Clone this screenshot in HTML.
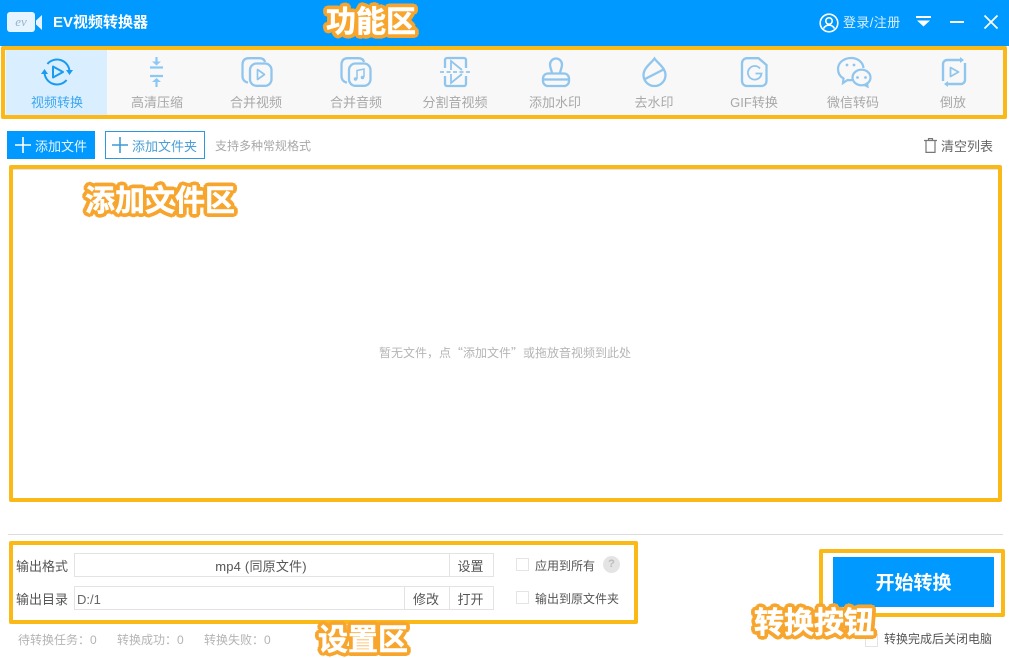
<!DOCTYPE html>
<html lang="zh-CN">
<head>
<meta charset="utf-8">
<title>EV视频转换器</title>
<style>
html,body{margin:0;padding:0;background:#fff}
body{width:1009px;height:658px;overflow:hidden;position:relative;font-family:"Liberation Sans","Noto Sans CJK SC",sans-serif;color:#555}
.a{position:absolute;box-sizing:border-box}
.t{position:absolute;white-space:nowrap;line-height:18px}
.c{transform:translateX(-50%);text-align:center}
.y{position:absolute;box-sizing:border-box;border:4px solid #fbb918;border-radius:2px}
.lab{font-size:13px;color:#a8a8a8;top:94px}
.ov{position:absolute;white-space:nowrap;font-weight:700;font-size:30px;line-height:34px;color:#fff;-webkit-text-stroke:.5px #fff;
text-shadow:4px 0 0 #f7a52c,-4px 0 0 #f7a52c,0 4px 0 #f7a52c,0 -4px 0 #f7a52c,2.800px 2.800px 0 #f7a52c,-2.800px 2.800px 0 #f7a52c,2.800px -2.800px 0 #f7a52c,-2.800px -2.800px 0 #f7a52c,3.700px 1.500px 0 #f7a52c,-3.700px 1.500px 0 #f7a52c,3.700px -1.500px 0 #f7a52c,-3.700px -1.500px 0 #f7a52c,1.500px 3.700px 0 #f7a52c,-1.500px 3.700px 0 #f7a52c,1.500px -3.700px 0 #f7a52c,-1.500px -3.700px 0 #f7a52c}
.box{position:absolute;box-sizing:border-box;border:1px solid #e3e3e3;background:#fff;font-size:13px;line-height:25px;text-align:center;color:#555}
.cb{position:absolute;box-sizing:border-box;width:13px;height:13px;border:1px solid #e4e4e4;background:#fff}
svg{position:absolute;overflow:visible}
</style>
</head>
<body>
<div class="a" style="left:0;top:0;width:1009px;height:46px;background:#0099ff"></div>

<svg style="left:7px;top:12px" width="36" height="20" viewBox="0 0 36 20">
<rect x="0" y="0" width="28" height="20" rx="3" fill="#e6f4ff"/>
<path d="M29 8.500L35 3V18L29 12.500z" fill="#e6f4ff"/>
<text x="14" y="14" font-size="13" font-style="italic" fill="#9ab2c8" text-anchor="middle" font-family="Liberation Serif,serif">ev</text>
</svg>
<div class="t" style="left:53px;top:14px;font-size:15px;font-weight:700;color:#fff">EV视频转换器</div>

<svg style="left:819px;top:13px" width="20" height="20" viewBox="0 0 20 20" fill="none" stroke="#fff" stroke-width="1.600">
<circle cx="10" cy="10" r="8.800"/><circle cx="10" cy="8" r="3.200"/><path d="M4.500 15.500c1.500-2.500 3.500-3.400 5.500-3.400s4 .9 5.500 3.400"/>
</svg>
<div class="t" style="left:843px;top:14px;font-size:13px;letter-spacing:.4px;color:#d8eeff">登录/注册</div>
<svg style="left:916px;top:16px" width="15" height="12" viewBox="0 0 15 12" fill="#fff"><rect x="0" y="0" width="15" height="2"/><path d="M1 4.500h13l-6.500 6z"/></svg>
<div class="a" style="left:950px;top:21px;width:14px;height:2px;background:#fff"></div>
<svg style="left:984px;top:15px" width="14" height="14" viewBox="0 0 14 14" stroke="#fff" stroke-width="1.700"><path d="M.5.500l13 13M13.500.500l-13 13"/></svg>

<!-- toolbar -->
<div class="a" style="left:1px;top:46px;width:1006px;height:73px;background:#f8f8f8"></div>
<div class="a" style="left:6px;top:50px;width:101px;height:65px;background:#d9efff"></div>
<div class="y" style="left:1px;top:46px;width:1006px;height:73px"></div>

<svg style="left:41px;top:57px" width="32" height="30" viewBox="0 0 32 30" fill="none" stroke="#1a9bf0" stroke-width="2">
<path d="M6.400 7A12.500 12.500 0 0 1 28.500 15"/><path d="M25.600 23A12.500 12.500 0 0 1 3.500 15"/>
<path d="M12 9.500l10 5.500-10 5.500z" stroke-linejoin="round"/>
<path d="M0 17h7l-3.500-5z" fill="#1a9bf0" stroke="none"/><path d="M25 13h7l-3.500 5z" fill="#1a9bf0" stroke="none"/>
</svg>
<svg style="left:149px;top:57px" width="15" height="30" viewBox="0 0 15 30" fill="none" stroke="#8cc8f5" stroke-width="2.200">
<path d="M1 10.500h13M1 19h13"/><path d="M7.500 0v6M7.500 24v6"/>
<path d="M3 4.500h9L7.500 8.500zM3 25h9l-4.500-4z" fill="#8cc8f5" stroke="none"/>
</svg>
<svg style="left:241px;top:57px" width="32" height="30" viewBox="0 0 32 30" fill="none" stroke="#90c5ee" stroke-width="2.300">
<path d="M7 25.500C3.500 25 1.500 22.500 1.500 19V8C1.500 3.500 3.500 1.200 8 1.200h10c3.500 0 5.500 1.300 6 3.800"/>
<rect x="9" y="6.500" width="21.500" height="22.300" rx="6.500"/><path d="M16.500 12.500l7 5-7 5z" stroke-width="1.700" stroke-linejoin="round"/>
</svg>
<svg style="left:340px;top:57px" width="32" height="30" viewBox="0 0 32 30" fill="none" stroke="#90c5ee" stroke-width="2.300">
<path d="M7 25.500C3.500 25 1.500 22.500 1.500 19V8C1.500 3.500 3.500 1.200 8 1.200h10c3.500 0 5.500 1.300 6 3.800"/>
<rect x="9" y="6.500" width="21.500" height="22.300" rx="6.500"/>
<path d="M17 22V13.500l7-1.500V20" stroke-width="1.500"/><circle cx="15.500" cy="22" r="1.800" fill="#90c5ee" stroke="none"/><circle cx="22.500" cy="20.500" r="1.800" fill="#90c5ee" stroke="none"/>
</svg>
<svg style="left:440px;top:57px" width="31" height="30" viewBox="0 0 31 30" fill="none" stroke="#90c5ee" stroke-width="2.300">
<path d="M5 11V3a2 2 0 0 1 2-2h17a2 2 0 0 1 2 2v8M5 19v8a2 2 0 0 0 2 2h17a2 2 0 0 0 2-2v-8"/>
<path d="M0 15h31" stroke-dasharray="4 2.500" stroke-width="1.800"/>
<path d="M11 13V4l11 9M11 17v9l11-9" stroke-width="1.800"/>
</svg>
<svg style="left:542px;top:57px" width="28" height="30" viewBox="0 0 28 30" fill="none" stroke="#90c5ee" stroke-width="2.300">
<path d="M10 16.500c0-3-2-5-2-9a6 6 0 0 1 12 0c0 4-2 6-2 9"/>
<rect x="1" y="16.500" width="26" height="12.500" rx="5"/><path d="M1 22.500h26"/>
</svg>
<svg style="left:642px;top:57px" width="25" height="30" viewBox="0 0 25 30" fill="none" stroke="#90c5ee" stroke-width="2.300">
<path d="M12.500 1.500C9 6.500 1.500 11 1.500 18a11 11 0 0 0 22 0C23.500 11 16 6.500 12.500 1.500z"/><path d="M3 22L21.500 12.500"/>
</svg>
<svg style="left:741px;top:57px" width="27" height="30" viewBox="0 0 27 30" fill="none" stroke="#90c5ee" stroke-width="2.300">
<path d="M6 1.200h11.500L25.500 8v16a5 5 0 0 1-5 5H6a5 5 0 0 1-5-5V6.200a5 5 0 0 1 5-5z"/>
<path d="M19 11.500A6.800 6.800 0 1 0 20.500 16.500H14.500" stroke-width="1.800"/>
</svg>
<svg style="left:837px;top:57px" width="34" height="30" viewBox="0 0 34 30" fill="none" stroke="#90c5ee" stroke-width="2.200">
<path d="M15 23c-1.500.3-3 .3-4.500 0L6 26l.5-4.500C3 19.500 1 16 1 12 1 5.500 7 1 14 1c6.500 0 12 4 12.500 10"/>
<ellipse cx="24.500" cy="20.500" rx="9" ry="7.800"/><path d="M27.500 28l3 1.500-.5-4"/>
<circle cx="10" cy="8" r="1.400" fill="#90c5ee" stroke="none"/><circle cx="17" cy="8" r="1.400" fill="#90c5ee" stroke="none"/>
<circle cx="20.500" cy="20.500" r="1.400" fill="#90c5ee" stroke="none"/><circle cx="28.500" cy="20.500" r="1.400" fill="#90c5ee" stroke="none"/>
</svg>
<svg style="left:942px;top:57px" width="24" height="30" viewBox="0 0 24 30" fill="none" stroke="#90c5ee" stroke-width="2.400">
<path d="M19 3H5a4 4 0 0 0-4 4v17"/><path d="M5 27h14a4 4 0 0 0 4-4V6"/>
<path d="M18 0v6l4-3zM6 24v6l-4-3z" fill="#90c5ee" stroke="none"/>
<path d="M8.500 10.500l8 4.500-8 4.500z" stroke-width="1.800" stroke-linejoin="round"/>
</svg>

<div class="t c lab" style="left:57px;color:#3ca6f0">视频转换</div>
<div class="t c lab" style="left:157px">高清压缩</div>
<div class="t c lab" style="left:256px">合并视频</div>
<div class="t c lab" style="left:356px">合并音频</div>
<div class="t c lab" style="left:455px">分割音视频</div>
<div class="t c lab" style="left:555px">添加水印</div>
<div class="t c lab" style="left:654px">去水印</div>
<div class="t c lab" style="left:754px">GIF转换</div>
<div class="t c lab" style="left:853px">微信转码</div>
<div class="t c lab" style="left:953px">倒放</div>

<!-- add buttons -->
<div class="a" style="left:7px;top:131px;width:88px;height:28px;background:#0099ff"></div>
<svg style="left:15px;top:137px" width="16" height="16" stroke="#fff" stroke-width="1.600"><path d="M8 0v16M0 8h16"/></svg>
<div class="t" style="left:35px;top:138px;font-size:13px;color:#e8f5ff">添加文件</div>
<div class="a" style="left:105px;top:131px;width:100px;height:28px;border:1px solid #2f98dc;background:#fff"></div>
<svg style="left:112px;top:137px" width="16" height="16" stroke="#3d9ad8" stroke-width="1.600"><path d="M8 0v16M0 8h16"/></svg>
<div class="t" style="left:132px;top:138px;font-size:13px;color:#4a9fd6">添加文件夹</div>
<div class="t" style="left:215px;top:137px;font-size:12px;color:#a8a8a8">支持多种常规格式</div>
<svg style="left:924px;top:138px" width="13" height="15" viewBox="0 0 13 15" fill="none" stroke="#777" stroke-width="1.200">
<path d="M0 2.500h13M4.500 2.500V.6h4v1.900M2 2.500v11.900h9V2.500"/>
</svg>
<div class="t" style="left:941px;top:138px;font-size:13px;color:#666">清空列表</div>

<!-- file area -->
<div class="y" style="left:9px;top:165px;width:993px;height:337px"></div>
<div class="a" style="left:13px;top:169px;width:985px;height:1px;background:#e4e4e4"></div>
<div class="t c" style="left:505px;top:344px;font-size:12px;color:#b5b5b5;font-family:'Noto Sans CJK SC',sans-serif">暂无文件，点“添加文件”或拖放音视频到此处</div>

<!-- settings -->
<div class="a" style="left:8px;top:534px;width:995px;height:1px;background:#dcdcdc"></div>
<div class="y" style="left:9px;top:541px;width:629px;height:83px"></div>
<div class="t" style="left:16px;top:558px;font-size:13px;color:#555">输出格式</div>
<div class="t" style="left:16px;top:591px;font-size:13px;color:#555">输出目录</div>
<div class="box" style="left:74px;top:553px;width:376px;height:24px;letter-spacing:.2px;padding-right:2px">mp4 (同原文件)</div>
<div class="box" style="left:449px;top:553px;width:45px;height:24px;padding-right:2px">设置</div>
<div class="box" style="left:74px;top:586px;width:331px;height:24px;text-align:left;padding-left:2px;color:#666">D:/1</div>
<div class="box" style="left:404px;top:586px;width:46px;height:24px;padding-right:2px">修改</div>
<div class="box" style="left:449px;top:586px;width:45px;height:24px;padding-right:2px">打开</div>
<div class="cb" style="left:516px;top:558px"></div>
<div class="t" style="left:535px;top:557px;font-size:12px;color:#555">应用到所有</div>
<div class="a" style="left:603px;top:556px;width:17px;height:17px;border-radius:50%;background:#e4e4e4;color:#bbb;font-size:11px;font-weight:700;line-height:17px;text-align:center">?</div>
<div class="cb" style="left:516px;top:591px"></div>
<div class="t" style="left:535px;top:590px;font-size:12px;color:#555">输出到原文件夹</div>
<div class="t" style="left:18px;top:631px;font-size:12px;color:#b4b4b4">待转换任务：0</div>
<div class="t" style="left:117px;top:631px;font-size:12px;color:#b4b4b4">转换成功：0</div>
<div class="t" style="left:204px;top:631px;font-size:12px;color:#b4b4b4">转换失败：0</div>

<!-- start -->
<div class="y" style="left:819px;top:549px;width:186px;height:68px"></div>
<div class="a" style="left:833px;top:557px;width:161px;height:50px;background:#0099ff;color:#fff;font-size:19px;font-weight:700;line-height:53px;text-align:center">开始转换</div>
<div class="cb" style="left:865px;top:634px"></div>
<div class="t" style="left:884px;top:630px;font-size:12px;color:#555">转换完成后关闭电脑</div>

<!-- overlay labels -->
<div class="ov" style="left:326px;top:6px">功能区</div>
<div class="ov" style="left:85px;top:185px">添加文件区</div>
<div class="ov" style="left:318px;top:624px">设置区</div>
<div class="ov" style="left:754px;top:607px">转换按钮</div>
</body>
</html>
